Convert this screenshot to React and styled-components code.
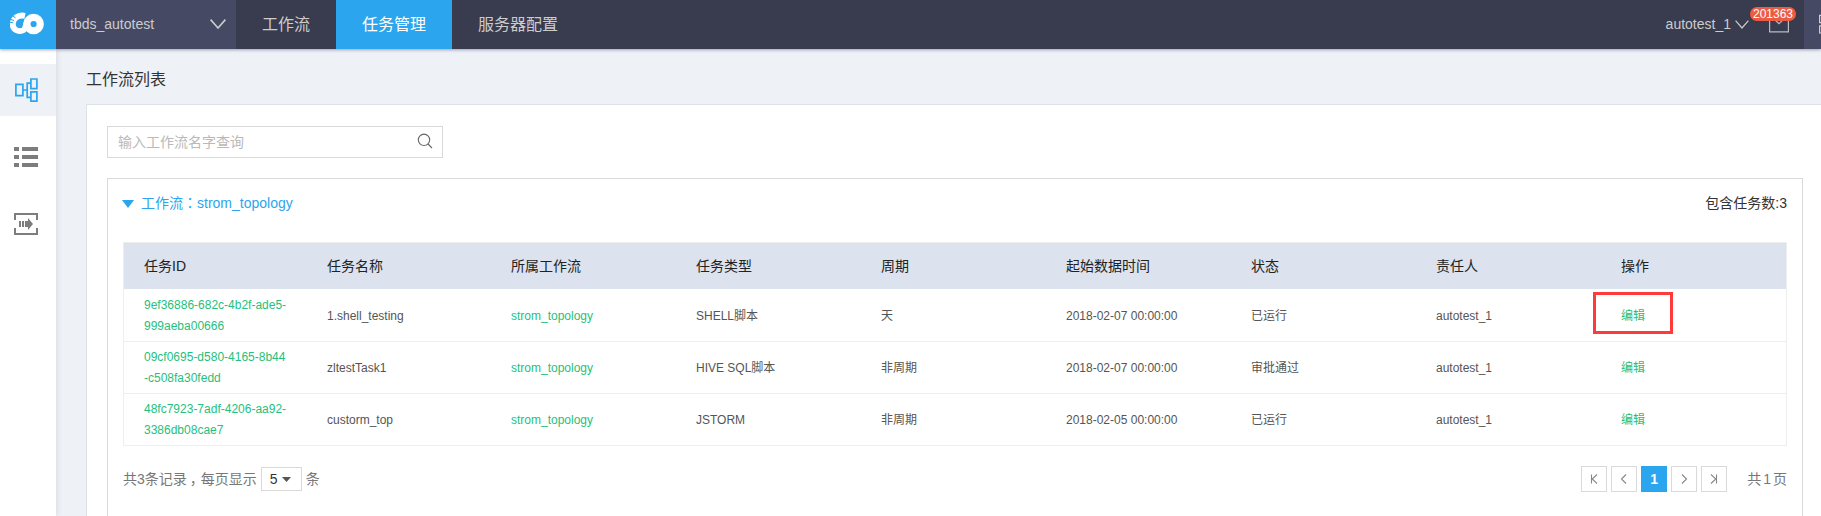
import React from "react";
import styled, { createGlobalStyle } from "styled-components";

const GlobalStyle = createGlobalStyle`
  *, *::before, *::after { box-sizing: border-box; }
  body {
    margin: 0;
    overflow: hidden;
    background: #eef1f6;
    font-family: "Liberation Sans", "Noto Sans CJK SC", sans-serif;
    font-size: 14px;
    color: #333;
  }
  svg { display: block; flex: none; }
`;

const Page = styled.div`
  height: 516px;
  display: flex;
  flex-direction: column;
  overflow: hidden;
`;

const Header = styled.header`
  height: 49px;
  flex: none;
  display: flex;
  background: #393b4e;
  color: #ccc;
  box-shadow: 0 1px 3px rgba(57, 59, 110, 0.45);
  z-index: 2;
`;

const Logo = styled.div`
  width: 56px;
  background: #2ba5ee;
`;

const ProjectSelect = styled.div`
  width: 180px;
  padding: 0 10px 1px 14px;
  display: flex;
  align-items: center;
  justify-content: space-between;
  background: #464964;
`;

const Tab = styled.a`
  padding: 0 26px;
  line-height: 49px;
  font-size: 16px;
  color: ${(p) => (p.$active ? "#fff" : "#ccc")};
  background: ${(p) => (p.$active ? "#2ba5ee" : "transparent")};
`;

const User = styled.div`
  margin-left: auto;
  display: flex;
  align-items: center;
  gap: 4px;
  padding-bottom: 1px;
`;

const Mail = styled.div`
  position: relative;
  margin: 12px 15px 0 20px;
`;

const Badge = styled.span`
  position: absolute;
  top: -5px;
  left: -19px;
  width: 46px;
  height: 14px;
  border-radius: 7px;
  background: #ee5b43;
  color: #fff;
  font-size: 12px;
  line-height: 14px;
  text-align: center;
`;

const AppsButton = styled.div`
  width: 17px;
  padding: 14px 0 0 15px;
  overflow: hidden;
  background: #464964;
`;

const Body = styled.div`
  flex: 1;
  display: flex;
  min-height: 0;
`;

const Sidebar = styled.nav`
  width: 56px;
  flex: none;
  padding-top: 15px;
  display: flex;
  flex-direction: column;
  gap: 15px;
  background: #fff;
  box-shadow: 1px 0 5px rgba(90, 100, 130, 0.15);
`;

const SideItem = styled.a`
  height: 52px;
  display: flex;
  align-items: center;
  padding-left: 14px;
  background: ${(p) => (p.$active ? "#eef1f6" : "transparent")};
`;

const Main = styled.main`
  flex: 1;
  display: flex;
  flex-direction: column;
  padding-left: 30px;
`;

const Title = styled.h1`
  margin: 0;
  height: 55px;
  line-height: 62px;
  font-size: 16px;
  font-weight: 400;
  color: #333;
`;

const Panel = styled.section`
  flex: 1;
  padding: 21px 18px 0 20px;
  display: flex;
  flex-direction: column;
  gap: 20px;
  background: #fff;
  border: solid #dde1e9;
  border-width: 1px 0 0 1px;
`;

const Search = styled.div`
  width: 336px;
  height: 32px;
  flex: none;
  padding: 0 9px 2px 10px;
  display: flex;
  align-items: center;
  justify-content: space-between;
  border: 1px solid #d9d9d9;
  color: #b9b9b9;
`;

const Group = styled.section`
  flex: 1;
  padding: 0 15px;
  border: 1px solid #d9d9d9;
  border-bottom: 0;
`;

const GroupHead = styled.div`
  height: 63px;
  padding-bottom: 18px;
  display: flex;
  align-items: center;
  margin-left: -1px;
`;

const GroupCaret = styled.span`
  margin: 4px 7px 0 0;
`;

const GroupName = styled.span`
  color: #2ba5ee;
`;

const Colon = styled.span`
  font-family: "Noto Sans CJK TC", sans-serif;
  line-height: 1;
`;

const Comma = styled.span`
  display: inline-block;
  width: 14px;
  padding-left: 3px;
  white-space: nowrap;
`;

const GroupCount = styled.span`
  margin-left: auto;
`;

const Table = styled.div`
  border: 1px solid #eee;
`;

const Row = styled.div`
  display: grid;
  grid-template-columns: 183px 184px repeat(6, 185px) 1fr;
  align-items: center;
  height: 52px;
  padding-top: 2px;
  border-bottom: 1px solid #eee;
  font-size: 12px;
  line-height: 21px;
  color: #555;

  &:nth-child(2) {
    height: 53px;
    padding-top: 3px;
  }

  &:last-child {
    height: 51px;
    border-bottom: 0;
  }
`;

const HeadRow = styled(Row)`
  height: 46px;
  padding-top: 0;
  border: 0;
  background: #dce3ee;
  font-size: 14px;
  color: #222;
`;

const Cell = styled.div`
  position: relative;
  padding-left: 20px;
  white-space: pre;
  color: ${(p) => (p.$link ? "#26bf7c" : "inherit")};
`;

const IdCell = styled(Cell)`
  padding-bottom: 2px;
`;

const Highlight = styled.span`
  position: absolute;
  top: -14px;
  left: -8px;
  width: 80px;
  height: 42px;
  border: 3px solid #ff3a3a;
`;

const Footer = styled.div`
  margin-top: 20px;
  height: 26px;
  display: flex;
  align-items: center;
  gap: 4px;
  color: #777;
`;

const FooterText = styled.span`
  padding-bottom: 2px;
`;

const PageSize = styled.div`
  width: 41px;
  height: 24px;
  padding: 0 10px 0 8px;
  display: flex;
  align-items: center;
  justify-content: space-between;
  border: 1px solid #d9d9d9;
  color: #333;
`;

const Pager = styled.div`
  margin-left: auto;
  display: flex;
  gap: 4px;
`;

const PageButton = styled.button`
  width: 26px;
  height: 26px;
  padding: 0;
  display: flex;
  align-items: center;
  justify-content: center;
  font: 700 14px "Liberation Sans", sans-serif;
  color: #fff;
  border: 1px solid ${(p) => (p.$active ? "#2ba5ee" : "#d9d9d9")};
  background: ${(p) => (p.$active ? "#2ba5ee" : "#fff")};
`;

const PageTotal = styled.span`
  display: flex;
  align-items: baseline;
  gap: 2px;
  margin-left: 16px;
  padding-bottom: 2px;
`;

const Chevron = ({ w, h, sw }) => (
  <svg width={w} height={h} viewBox={`0 0 ${w} ${h}`} fill="none" stroke="#ccc" strokeWidth={sw}>
    <path d={`M.6 .6 L${w / 2} ${h - 1} L${w - 0.6} .6`} />
  </svg>
);

const LogoMark = () => (
  <svg width="56" height="49" viewBox="0 0 56 49" fill="none">
    <circle cx="33.6" cy="24" r="6.7" stroke="#fff" strokeWidth="7.2" />
    <path d="M25 15.8C19 14.6 13 17.6 12.8 24C12.6 29.6 18 32.4 23 30.4C26 29 25.5 24 28 19.5" stroke="#fff" strokeWidth="5.8" />
    <path d="M8.5 18.6l5.5 2M8.6 22l4.6 .8M11.6 15l4 3" stroke="#2ba5ee" strokeWidth="1" />
  </svg>
);

const FlowIcon = () => (
  <svg width="24" height="24" viewBox="0 0 24 24" fill="none" stroke="#2ba5ee" strokeWidth="1.7">
    <path d="M1.9 6.4h7v11.2h-7zM16.9 1h6v9.6h-6zM16.9 13.9h6v9.2h-6zM9 12h4M17 5.2h-3.8v14.2H17" />
  </svg>
);

const ListIcon = () => (
  <svg width="24" height="20" viewBox="0 0 24 20" fill="#7d7d7d">
    <path d="M0 0h5v4H0zM8 0h16v4H8zM0 8h5v4H0zM8 8h16v4H8zM0 16h5v4H0zM8 16h16v4H8z" />
  </svg>
);

const DeliverIcon = () => (
  <svg width="24" height="22" viewBox="0 0 24 22">
    <path d="M1 7V1h22v6M1 15v6h22v-6" fill="none" stroke="#7d7d7d" strokeWidth="2" />
    <path d="M5 8h2v6H5zM8 8h2v6H8zM11 8h3V5l5 6-5 6v-3h-3z" fill="#7d7d7d" />
  </svg>
);

const SearchIcon = () => (
  <svg width="16" height="16" viewBox="0 0 16 16" fill="none" stroke="#666" strokeWidth="1.1">
    <circle cx="7" cy="6.8" r="5.7" />
    <path d="M11 11l4 4" />
  </svg>
);

const MailIcon = () => (
  <svg width="20" height="21" viewBox="0 0 20 21" fill="none" stroke="#b9bac2" strokeWidth="1.2">
    <path d="M.6 4.6h18.8v15.2H.6zM5 7l5 4.6L15 7" />
  </svg>
);

const AppsIcon = () => (
  <svg width="20" height="22" viewBox="0 0 20 22" fill="none" stroke="#ccc" strokeWidth="1.2">
    <path d="M.6 1.4h7v7.2h-7zM.6 11.8h7V19h-7z" />
  </svg>
);

const Caret = ({ w, h, color }) => (
  <svg width={w} height={h} viewBox={`0 0 ${w} ${h}`} fill={color}>
    <path d={`M0 0h${w}L${w / 2} ${h}z`} />
  </svg>
);

const PAGE_ARROWS = {
  first: "M4.5 2.5v9M10 2.5L5.2 7l4.8 4.5",
  prev: "M9 2.5L4.5 7 9 11.5",
  next: "M5 2.5L9.5 7 5 11.5",
  last: "M9.5 2.5v9M4 2.5L8.8 7 4 11.5",
};

const PageArrow = ({ kind }) => (
  <svg width="14" height="14" viewBox="0 0 14 14" fill="none" stroke="#888" strokeWidth="1.1">
    <path d={PAGE_ARROWS[kind]} />
  </svg>
);

const COLUMNS = ["任务ID", "任务名称", "所属工作流", "任务类型", "周期", "起始数据时间", "状态", "责任人", "操作"];

const TASKS = [
  { id: "9ef36886-682c-4b2f-ade5-\n999aeba00666", name: "1.shell_testing", type: "SHELL脚本", cycle: "天", start: "2018-02-07 00:00:00", status: "已运行", marked: true },
  { id: "09cf0695-d580-4165-8b44\n-c508fa30fedd", name: "zltestTask1", type: "HIVE SQL脚本", cycle: "非周期", start: "2018-02-07 00:00:00", status: "审批通过" },
  { id: "48fc7923-7adf-4206-aa92-\n3386db08cae7", name: "custorm_top", type: "JSTORM", cycle: "非周期", start: "2018-02-05 00:00:00", status: "已运行" },
];

export default function App() {
  return (
    <Page>
      <GlobalStyle />
      <Header>
        <Logo><LogoMark /></Logo>
        <ProjectSelect>
          tbds_autotest
          <Chevron w={16} h={10} sw={1.6} />
        </ProjectSelect>
        <Tab>工作流</Tab>
        <Tab $active>任务管理</Tab>
        <Tab>服务器配置</Tab>
        <User>
          autotest_1
          <Chevron w={14} h={9} sw={1.2} />
        </User>
        <Mail>
          <MailIcon />
          <Badge>201363</Badge>
        </Mail>
        <AppsButton><AppsIcon /></AppsButton>
      </Header>
      <Body>
        <Sidebar>
          <SideItem $active><FlowIcon /></SideItem>
          <SideItem><ListIcon /></SideItem>
          <SideItem><DeliverIcon /></SideItem>
        </Sidebar>
        <Main>
          <Title>工作流列表</Title>
          <Panel>
            <Search>
              输入工作流名字查询
              <SearchIcon />
            </Search>
            <Group>
              <GroupHead>
                <GroupCaret><Caret w={12} h={8} color="#2ba5ee" /></GroupCaret>
                <GroupName>工作流<Colon>：</Colon>strom_topology</GroupName>
                <GroupCount>包含任务数:3</GroupCount>
              </GroupHead>
              <Table>
                <HeadRow>
                  {COLUMNS.map((name) => <Cell key={name}>{name}</Cell>)}
                </HeadRow>
                {TASKS.map((task) => (
                  <Row key={task.id}>
                    <IdCell $link>{task.id}</IdCell>
                    <Cell>{task.name}</Cell>
                    <Cell $link>strom_topology</Cell>
                    <Cell>{task.type}</Cell>
                    <Cell>{task.cycle}</Cell>
                    <Cell>{task.start}</Cell>
                    <Cell>{task.status}</Cell>
                    <Cell>autotest_1</Cell>
                    <Cell $link>
                      编辑
                      {task.marked && <Highlight />}
                    </Cell>
                  </Row>
                ))}
              </Table>
              <Footer>
                <FooterText>共3条记录<Comma>，</Comma>每页显示</FooterText>
                <PageSize>
                  5
                  <Caret w={9} h={5} color="#555" />
                </PageSize>
                <FooterText>条</FooterText>
                <Pager>
                  <PageButton><PageArrow kind="first" /></PageButton>
                  <PageButton><PageArrow kind="prev" /></PageButton>
                  <PageButton $active>1</PageButton>
                  <PageButton><PageArrow kind="next" /></PageButton>
                  <PageButton><PageArrow kind="last" /></PageButton>
                </Pager>
                <PageTotal><span>共</span><span>1</span><span>页</span></PageTotal>
              </Footer>
            </Group>
          </Panel>
        </Main>
      </Body>
    </Page>
  );
}
